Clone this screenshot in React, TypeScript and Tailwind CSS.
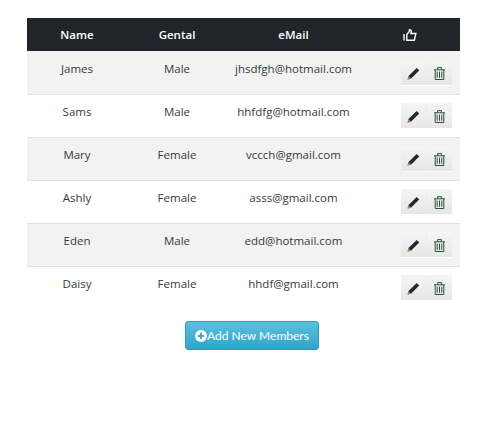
import React from "react";

const rows = [
  ["James", "Male", "jhsdfgh@hotmail.com"],
  ["Sams", "Male", "hhfdfg@hotmail.com"],
  ["Mary", "Female", "vccch@gmail.com"],
  ["Ashly", "Female", "asss@gmail.com"],
  ["Eden", "Male", "edd@hotmail.com"],
  ["Daisy", "Female", "hhdf@gmail.com"],
];

function Pencil() {
  return (
    <svg width="13" height="13" viewBox="0 0 13 13">
      <path d="M.6 12.4l.9-3.5L9.7.9l2.5 2.5-8 8.1z" fill="#1c2a33" />
      <path d="M.6 12.4l.9-3.5 2.6 2.6z" fill="#b5822f" />
    </svg>
  );
}

function Trash() {
  return (
    <svg width="11" height="13" viewBox="0 0 11 13" fill="none" stroke="#2b5238" strokeWidth="1">
      <path d="M0 2.8h11M3.6 2.5V.6h3.8v1.9M1.2 2.8v9.7h8.6V2.8M3.2 4.6v6.2M5.5 4.6v6.2M7.8 4.6v6.2" />
    </svg>
  );
}

function Thumb() {
  return (
    <svg width="14" height="12" viewBox="0 0 14 12" fill="none" stroke="#fff" strokeWidth="1.4">
      <path d="M1 5v6.5M3.8 5.5l2.6-3V.7c1.4 0 2 1 2 2L7.9 4.5h5l-1.6 6.8H3.8z" />
    </svg>
  );
}

export default function App() {
  return (
    <div className="w-[489px] h-[442px] bg-white pt-[18px] pl-[27px] font-['Open_Sans','Liberation_Sans',sans-serif] text-[11.5px] text-[#343a40]">
      <div className="w-[433px]">
        <div className="grid grid-cols-[100px_100px_133px_100px] items-center h-[33px] bg-[#212529] text-white font-semibold text-center">
          <span>Name</span>
          <span>Gental</span>
          <span>eMail</span>
          <span className="flex justify-center"><Thumb /></span>
        </div>
        {rows.map((r, i) => (
          <div
            key={r[0]}
            className={`grid grid-cols-[100px_100px_133px_100px] text-center h-[43px] border-t ${i === 0 ? "border-transparent" : "border-[#dee2e6]"} ${i % 2 === 0 ? "bg-[#f2f2f2]" : "bg-white"}`}
          >
            <span className="pt-[8px]">{r[0]}</span>
            <span className="pt-[8px]">{r[1]}</span>
            <span className="pt-[8px]">{r[2]}</span>
            <div className="pt-[8px] pl-[41px]">
              <div className="flex h-[26px] w-[51px] pt-[1px] border-b border-white bg-gradient-to-b from-[#f5f5f5] to-[#e6e6e6]">
                <span className="flex-1 flex items-center justify-center border-r border-[#ececec]"><Pencil /></span>
                <span className="flex-1 flex items-center justify-center"><Trash /></span>
              </div>
            </div>
          </div>
        ))}
        <div className="pt-[12px] pl-[158px]">
          <button className="flex items-center w-[134px] h-[29px] justify-center rounded-[3px] border border-[#2f9cc0] bg-gradient-to-b from-[#5bc0de] to-[#2fa4c9] text-white font-['Lato','Liberation_Sans',sans-serif] text-[12px]">
            <svg width="12" height="12" viewBox="0 0 13 13"><circle cx="6.5" cy="6.5" r="6.5" fill="#fff" /><path d="M6.5 3v7M3 6.5h7" stroke="#3aa9cd" strokeWidth="2" /></svg>
            Add New Members
          </button>
        </div>
      </div>
    </div>
  );
}
